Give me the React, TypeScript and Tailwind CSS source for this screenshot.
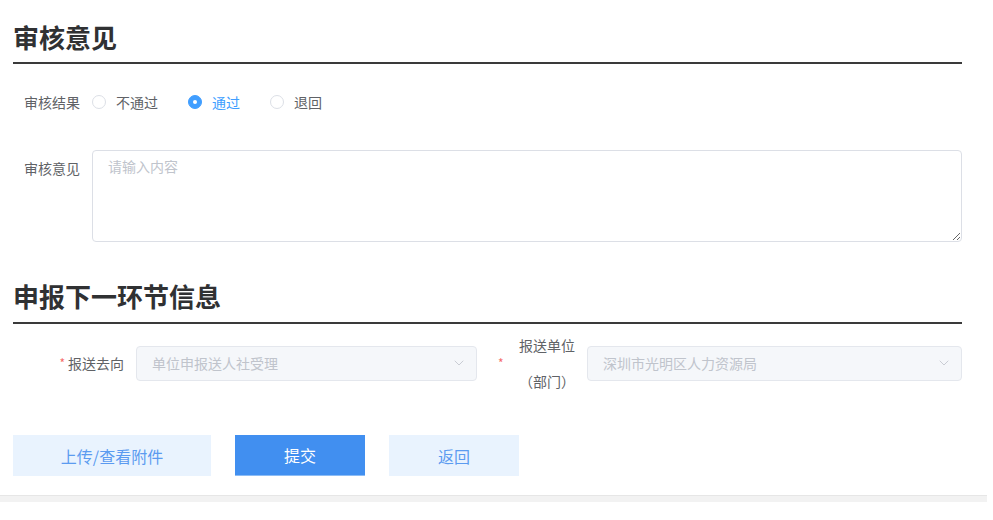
import { ChevronDown } from 'lucide-react';

const font = { fontFamily: '"Noto Sans CJK SC", "Noto Sans", sans-serif' };

function Radio({ label, checked }: { label: string; checked?: boolean }) {
  return (
    <label className="mr-[30px] flex items-center">
      <span
        className={`flex h-[14px] w-[14px] items-center justify-center rounded-full border ${
          checked ? 'border-[#409eff] bg-[#409eff]' : 'border-[#dcdfe6] bg-white'
        }`}
      >
        {checked && <span className="h-[4px] w-[4px] rounded-full bg-white" />}
      </span>
      <span className={`pl-[10px] text-[14px] ${checked ? 'text-[#409eff]' : 'text-[#606266]'}`}>{label}</span>
    </label>
  );
}

function Select({ value, className }: { value: string; className: string }) {
  return (
    <div className={`flex h-[35px] items-center justify-between rounded-[4px] border border-[#e4e7ed] bg-[#f5f7fa] pl-[15px] pr-[9px] ${className}`}>
      <span className="text-[14px] text-[#c0c4cc]">{value}</span>
      <ChevronDown className="h-[16px] w-[16px] text-[#c0c4cc]" strokeWidth={1.25} />
    </div>
  );
}

export default function App() {
  return (
    <div className="relative h-[520px] w-[993px] overflow-hidden bg-white" style={font}>
      <div className="w-[962px] pl-[13px]">
        <h2 className="mt-[19px] h-[36px] text-[26px] font-bold leading-[36px] text-[#303133]">审核意见</h2>
        <div className="mt-[7px] h-[2px] bg-[#3a3a3a]" />

        <div className="mt-[28px] flex h-[20px] items-center">
          <div className="w-[79px] pr-[12px] text-right text-[14px] text-[#606266]">审核结果</div>
          <Radio label="不通过" />
          <Radio label="通过" checked />
          <Radio label="退回" />
        </div>

        <div className="mt-[38px] flex items-start">
          <div className="w-[79px] pr-[12px] text-right text-[14px] leading-[36px] text-[#606266]">审核意见</div>
          <textarea
            className="h-[92px] flex-1 rounded-[4px] border border-[#dcdfe6] px-[15px] py-[5px] text-[14px] leading-[1.5] text-[#606266] outline-none placeholder:text-[#c0c4cc]"
            placeholder="请输入内容"
          />
        </div>

        <h2 className="mt-[36px] h-[36px] text-[26px] font-bold leading-[36px] text-[#303133]">申报下一环节信息</h2>
        <div className="mt-[8px] h-[2px] bg-[#3a3a3a]" />

        <div className="mt-[3px] flex h-[72px] items-center">
          <div className="flex w-[123px] items-center justify-end pr-[12px] text-[14px] text-[#606266]">
            <span className="mr-[3px] text-[12px] text-[#f56c6c]">*</span>
            <span>报送去向</span>
          </div>
          <Select className="w-[341px]" value="单位申报送人社受理" />
          <div className="flex w-[110px] items-center pr-[12px] text-[14px] text-[#606266]">
            <span className="ml-[21px] text-[12px] text-[#f56c6c]">*</span>
            <span className="ml-auto w-[56px] text-center leading-[36px]">报送单位（部门）</span>
          </div>
          <Select className="flex-1" value="深圳市光明区人力资源局" />
        </div>

        <div className="mt-[36px] flex gap-[24px]">
          <button className="h-[41px] w-[198px] bg-[#e9f3fe] text-[16px] text-[#5b9bf0]">上传/查看附件</button>
          <button className="h-[41px] w-[130px] border-b border-[#8cbcf5] bg-[#418ff0] text-[16px] text-white">提交</button>
          <button className="h-[41px] w-[130px] bg-[#e9f3fe] text-[16px] text-[#5b9bf0]">返回</button>
        </div>
      </div>

      <div className="mt-[19px] h-[7px] w-[987px] border-t border-[#e6e6e6] bg-[#f2f2f2]" />
    </div>
  );
}
